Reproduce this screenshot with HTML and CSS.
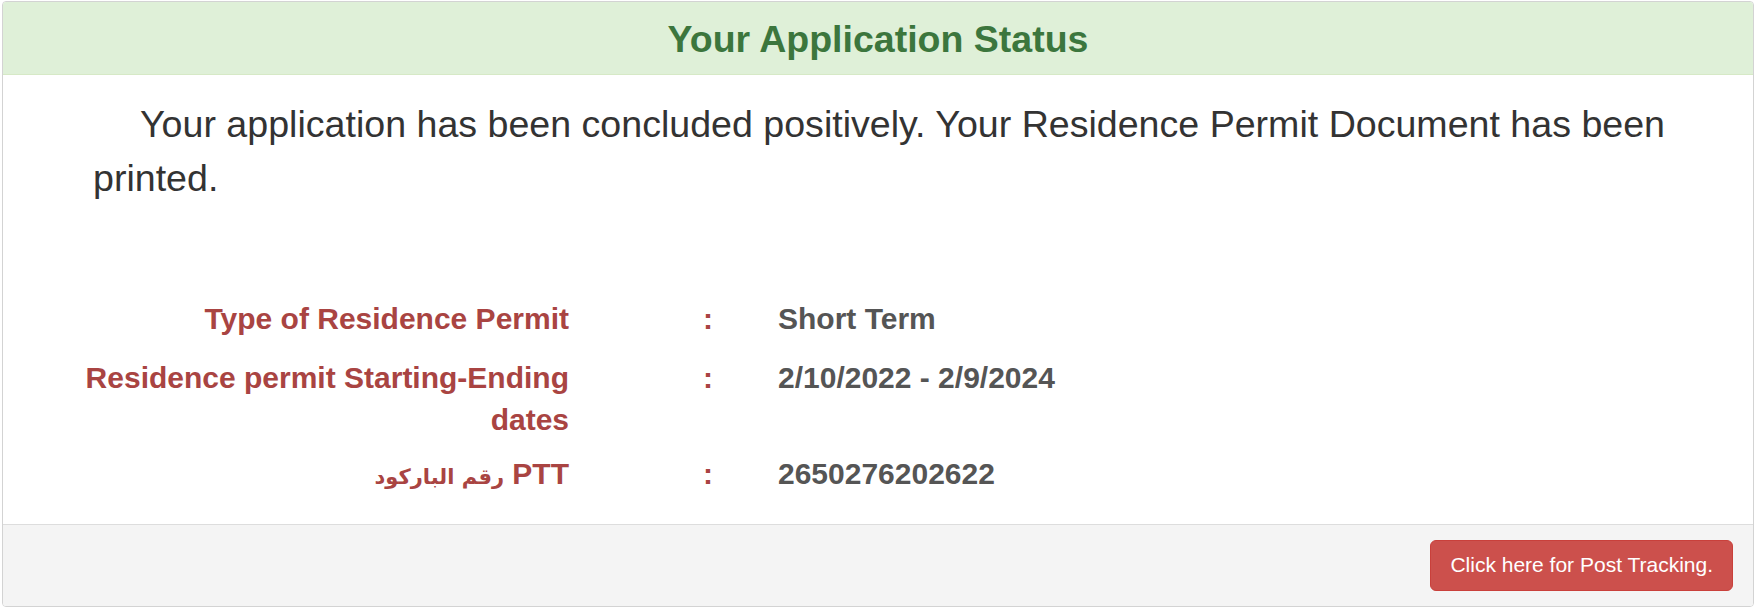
FILE: index.html
```html
<!DOCTYPE html>
<html lang="en">
<head>
<meta charset="utf-8">
<title>Your Application Status</title>
<link rel="stylesheet" href="styles.css">
</head>
<body>
<div class="panel">
  <div class="panel-heading">
    <h2 class="panel-title">Your Application Status</h2>
  </div>
  <div class="panel-body">
    <p class="status-text">Your application has been concluded positively. Your Residence Permit Document has been printed.</p>
    <div class="details">
      <div class="detail-row row-type">
        <div class="label">Type of Residence Permit</div>
        <div class="colon">:</div>
        <div class="value">Short Term</div>
      </div>
      <div class="detail-row row-dates">
        <div class="label">Residence permit Starting-Ending dates</div>
        <div class="colon">:</div>
        <div class="value">2/10/2022 - 2/9/2024</div>
      </div>
      <div class="detail-row">
        <div class="label"><span class="ar">رقم الباركود</span> PTT</div>
        <div class="colon">:</div>
        <div class="value">2650276202622</div>
      </div>
    </div>
  </div>
  <div class="panel-footer">
    <button class="btn-danger" type="button">Click here for Post Tracking.</button>
  </div>
</div>
</body>
</html>
```

FILE: styles.css
```css
* {
  box-sizing: border-box;
}

html, body {
  margin: 0;
  padding: 0;
  background: #ffffff;
}

body {
  font-family: "Liberation Sans", Arial, "DejaVu Sans", sans-serif;
  color: #333333;
}

.panel {
  margin: 1px 1px 0 2px;
  border: 1px solid #d3d3d3;
  border-radius: 4px;
  overflow: hidden;
  background: #ffffff;
  height: 606px;
  display: flex;
  flex-direction: column;
}

.panel-heading {
  background: #dff0d8;
  border-bottom: 1px solid #d6e9c6;
  padding: 17px 0 15px;
  text-align: center;
}

.panel-title {
  margin: 0;
  font-size: 37.5px;
  line-height: 40px;
  font-weight: bold;
  color: #3c763d;
}

.panel-body {
  flex: 1;
  padding: 22px 0 0;
}

.status-text {
  margin: 0 50px 0 90px;
  font-size: 37.6px;
  line-height: 54px;
  text-indent: 47px;
  color: #333333;
}

.details {
  margin-top: 93px;
  padding-left: 36px;
  font-size: 30px;
  line-height: 42px;
  font-weight: bold;
}

.detail-row {
  display: grid;
  grid-template-columns: 530px 209px 1fr;
}

.row-type {
  margin-bottom: 17px;
}

.row-dates {
  margin-bottom: 12px;
}

.label {
  text-align: right;
  color: #a94442;
}

.ar {
  font-family: "DejaVu Sans", sans-serif;
  font-size: 21px;
}

.colon {
  color: #a94442;
  padding-left: 134px;
}

.value {
  color: #555555;
}

.panel-footer {
  background: #f4f4f4;
  border-top: 1px solid #dddddd;
  padding: 15px 20px 15px;
  display: flex;
  justify-content: flex-end;
  height: 82px;
}

.btn-danger {
  font-family: "Liberation Sans", Arial, sans-serif;
  font-size: 21px;
  line-height: 30px;
  color: #ffffff;
  background: #cc504c;
  border: 1px solid #c9403b;
  border-radius: 6px;
  padding: 9px 19px 10px;
  cursor: pointer;
}
```
